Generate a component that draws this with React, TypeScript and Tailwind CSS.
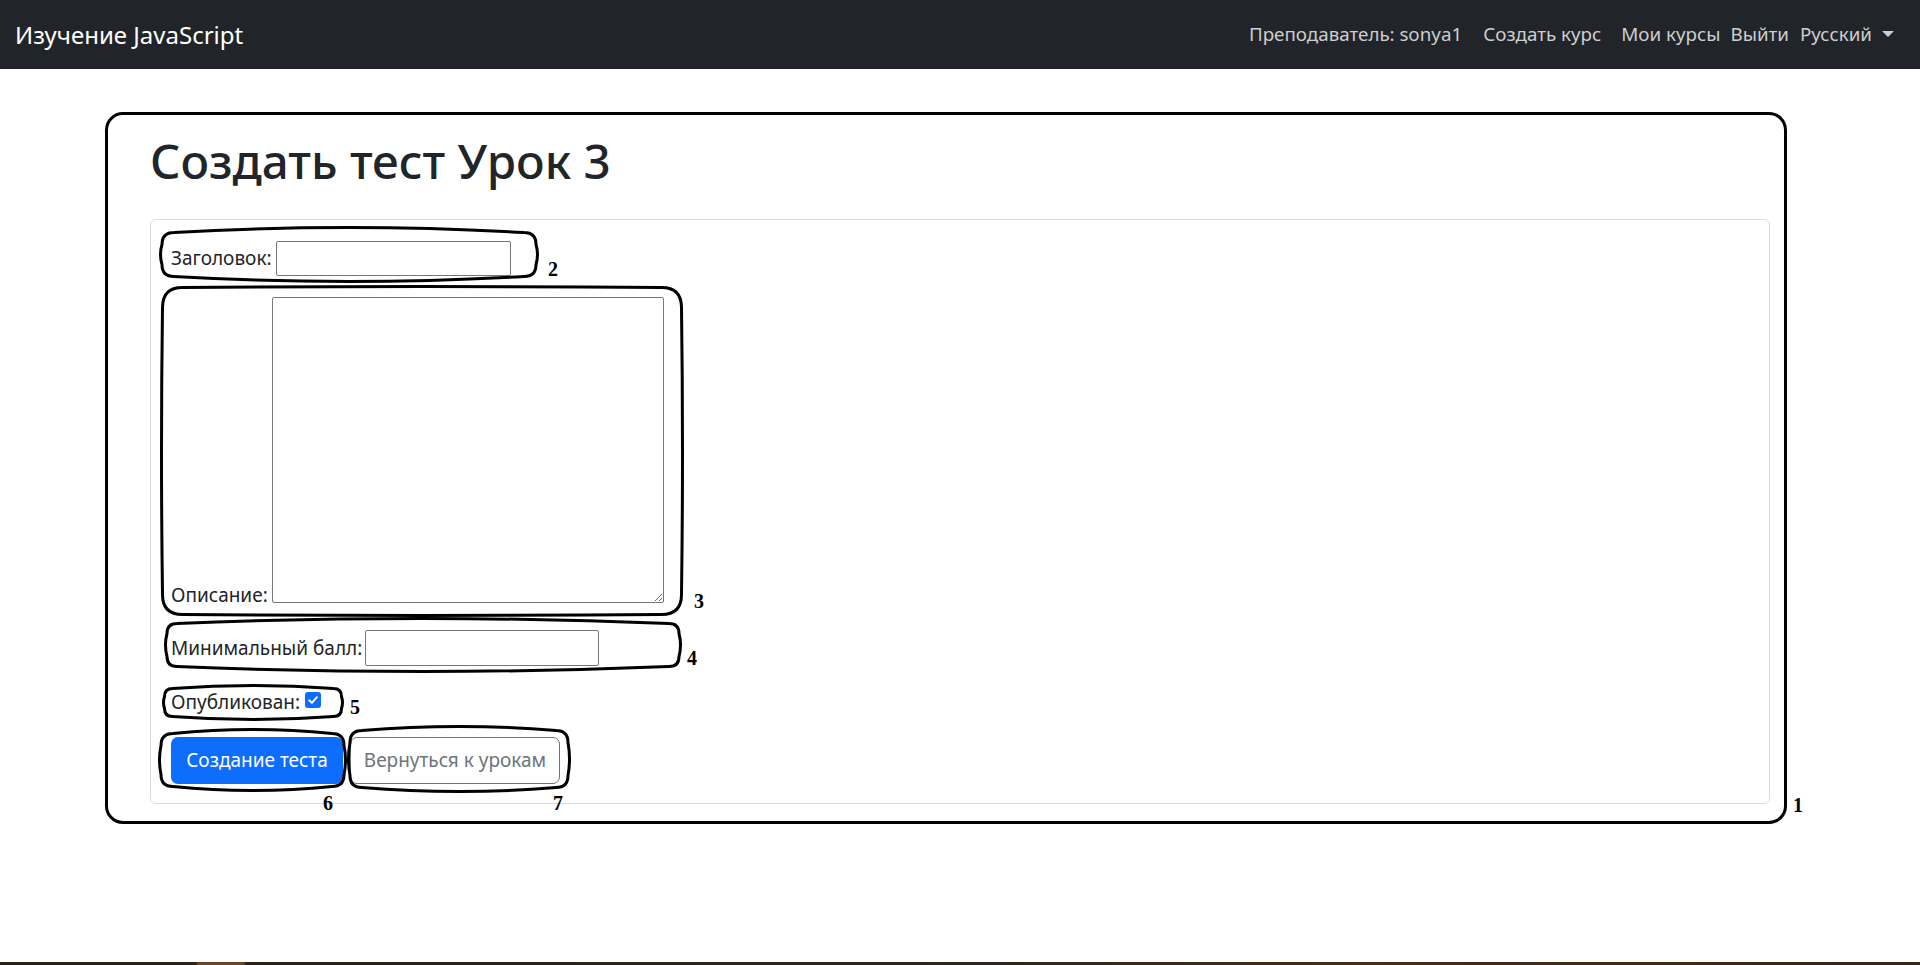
import React from "react";

type BlobProps = { w: number; h: number; r: number; b: number; s: number; className: string };

function Blob({ w, h, r, b, s, className }: BlobProps) {
  const x0 = 1.5 + s / 2;
  const x1 = w - 1.5 - s / 2;
  const y0 = 1.5;
  const y1 = h - 1.5;
  const d = `M ${x0 + r} ${y0 + b} Q ${w / 2} ${y0 - b} ${x1 - r} ${y0 + b} Q ${x1} ${y0 + b} ${x1} ${y0 + b + r} Q ${x1 + s} ${h / 2} ${x1} ${y1 - b - r} Q ${x1} ${y1 - b} ${x1 - r} ${y1 - b} Q ${w / 2} ${y1 + b} ${x0 + r} ${y1 - b} Q ${x0} ${y1 - b} ${x0} ${y1 - b - r} Q ${x0 - s} ${h / 2} ${x0} ${y0 + b + r} Q ${x0} ${y0 + b} ${x0 + r} ${y0 + b} Z`;
  return (
    <svg
      width={w}
      height={h}
      viewBox={`0 0 ${w} ${h}`}
      className={"absolute pointer-events-none " + className}
    >
      <path d={d} fill="none" stroke="#000" strokeWidth={3} strokeLinejoin="round" />
    </svg>
  );
}

function Num({ children, className }: { children: React.ReactNode; className: string }) {
  return (
    <span
      className={
        "absolute font-['Liberation_Serif',serif] font-bold text-[20px] leading-none text-black " + className
      }
    >
      {children}
    </span>
  );
}

export default function App() {
  return (
    <div className="w-[1920px] h-[965px] flex flex-col bg-white font-['Noto_Sans',sans-serif] text-[#212529] overflow-hidden">
      {/* Navbar */}
      <nav className="h-[69px] shrink-0 bg-[#212529] flex items-center justify-between pl-[15px] pr-[26px]">
        <a className="text-white text-[24px] leading-none">Изучение JavaScript</a>
        <div className="flex items-center text-[18.8px] leading-none text-[#cdcecf]">
          <span>Преподаватель: sonya1</span>
          <span className="ml-[21px]">Создать курс</span>
          <span className="ml-[20px]">Мои курсы</span>
          <span className="ml-[10px]">Выйти</span>
          <span className="ml-[11px]">Русский</span>
          <span className="ml-[10px] w-0 h-0 border-t-[6px] border-x-[6px] border-x-transparent border-t-[#cdcecf]" />
        </div>
      </nav>

      {/* Main */}
      <main className="flex-1">
        <div className="relative mt-[43px] ml-[105px] w-[1682px] border-[3px] border-black rounded-[18px] pt-[18px] pl-[42px] pr-[14px] pb-[17px]">
          <h1 className="text-[47.5px] leading-[56px] font-medium">Создать тест Урок 3</h1>

          <div className="mt-[30px] border border-[#dcdcdc] rounded-[6px] pt-[20px] pl-[20px] pb-[19px] text-[19px]">
            {/* Row 2: title */}
            <div className="relative flex items-center h-[36px]">
              <label className="w-[105px] shrink-0">Заголовок:</label>
              <input className="w-[235px] h-[35px] border border-[#767676] rounded-[2px] bg-white" />
              <Blob w={380} h={57} r={12} b={5} s={3} className="-left-[12px] -top-[14px]" />
              <Num className="left-[377px] top-[19px]">2</Num>
            </div>

            {/* Row 3: description */}
            <div className="relative flex items-end h-[306px] mt-[21px]">
              <label className="w-[101px] shrink-0 leading-none mb-[-2px]">Описание:</label>
              <textarea className="w-[392px] h-[306px] border border-[#767676] rounded-[2px] bg-white" />
              <Blob w={524} h={332} r={20} b={1} s={2} className="-left-[11px] -top-[12px]" />
              <Num className="left-[523px] top-[294px]">3</Num>
            </div>

            {/* Row 4: min score */}
            <div className="relative flex items-center h-[36px] mt-[27px]">
              <label className="w-[194px] shrink-0">Минимальный балл:</label>
              <input className="w-[234px] h-[36px] border border-[#767676] rounded-[2px] bg-white" />
              <Blob w={518} h={56} r={10} b={5} s={3} className="-left-[7px] -top-[13px]" />
              <Num className="left-[516px] top-[18px]">4</Num>
            </div>

            {/* Row 5: published */}
            <div className="relative flex items-center h-[30px] mt-[21px]">
              <label className="w-[134px] shrink-0">Опубликован:</label>
              <span className="w-[16px] h-[16px] rounded-[3px] bg-[#0d6efd] flex items-center justify-center mt-[-4px]">
                <svg width="12" height="12" viewBox="0 0 12 12">
                  <path d="M2.2 6.3 L4.9 8.9 L9.9 3.2" fill="none" stroke="#fff" strokeWidth="1.9" strokeLinecap="round" strokeLinejoin="round" />
                </svg>
              </span>
              <Blob w={182} h={37} r={8} b={3} s={2} className="-left-[9px] -top-[3px]" />
              <Num className="left-[179px] top-[10px]">5</Num>
            </div>

            {/* Row 6: buttons */}
            <div className="relative flex items-center h-[47px] mt-[20px]">
              <button className="w-[172px] h-[47px] rounded-[7px] bg-[#0d6efd] text-white text-[19px]">
                Создание теста
              </button>
              <button className="ml-[7px] w-[210px] h-[47px] rounded-[7px] border border-[#6c757d] text-[#6c757d] text-[19px] bg-white">
                Вернуться к урокам
              </button>
              <Blob w={189} h={64} r={12} b={4} s={3} className="-left-[13px] -top-[9px]" />
              <Blob w={224} h={68} r={12} b={4} s={3} className="left-[176px] -top-[12px]" />
              <Num className="left-[152px] top-[56px]">6</Num>
              <Num className="left-[382px] top-[56px]">7</Num>
            </div>
          </div>

          <Num className="left-full ml-[9px] bottom-[6px]">1</Num>
        </div>
      </main>

      {/* bottom edge strip */}
      <div className="h-[3px] shrink-0 bg-[linear-gradient(90deg,#2b2117_0%,#2b2117_10.2%,#6b4322_10.3%,#6b4322_12.7%,#2b2117_12.8%,#30251a_50%,#4a2c14_72%,#3a2414_100%)]" />
    </div>
  );
}
